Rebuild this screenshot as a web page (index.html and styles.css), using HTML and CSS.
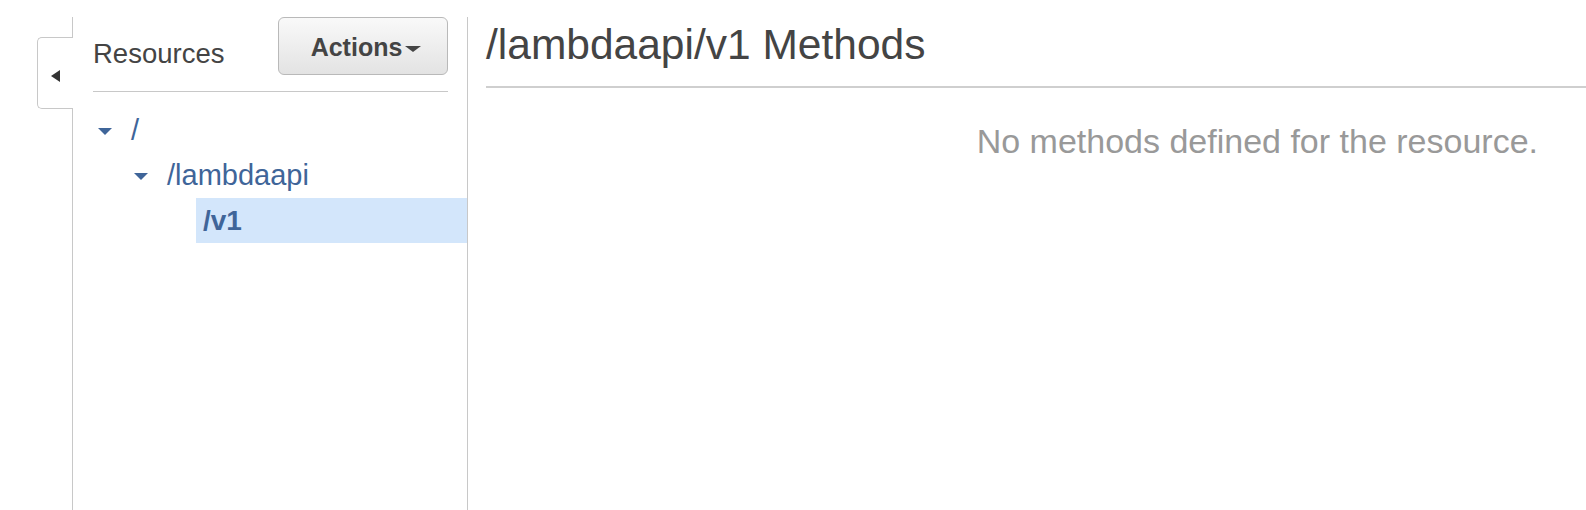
FILE: index.html
```html
<!DOCTYPE html>
<html>
<head>
<meta charset="utf-8">
<link rel="stylesheet" href="styles.css">
</head>
<body>
<div class="layout">
  <div class="tab"><span class="tab-arrow"></span></div>
  <aside class="nav">
    <div class="nav-header">
      <span class="nav-title">Resources</span>
      <button class="actions">Actions<span class="caret"></span></button>
    </div>
    <ul class="tree">
      <li class="row lvl0"><span class="tri"></span><span class="name">/</span></li>
      <li class="row lvl1"><span class="tri"></span><span class="name">/lambdaapi</span></li>
      <li class="row lvl2 selected"><span class="name">/v1</span></li>
    </ul>
  </aside>
  <main class="main">
    <h1 class="title">/lambdaapi/v1 Methods</h1>
    <p class="empty">No methods defined for the resource.</p>
  </main>
</div>
</body>
</html>
```
FILE: styles.css
```css
* { box-sizing: border-box; }
html, body { margin: 0; padding: 0; background: #fff; }
body {
  font-family: "Liberation Sans", Arial, sans-serif;
  width: 1586px;
  height: 510px;
  overflow: hidden;
}
.layout {
  display: flex;
  align-items: flex-start;
  padding-top: 17px;
  height: 510px;
}
.tab {
  margin-left: 37px;
  margin-top: 20px;
  width: 36px;
  height: 72px;
  margin-right: -1px;
  border: 1px solid #c8c8c8;
  border-right: none;
  border-radius: 5px 0 0 5px;
  background: #fff;
  position: relative;
  z-index: 1;
  display: flex;
  align-items: center;
  padding-left: 13px;
}
.tab-arrow {
  width: 0;
  height: 0;
  border-top: 6px solid transparent;
  border-bottom: 6px solid transparent;
  border-right: 9px solid #333;
  margin-top: 6px;
}
.nav {
  width: 396px;
  height: 493px;
  border-left: 1px solid #c8c8c8;
  border-right: 1px solid #c8c8c8;
  padding-left: 20px;
  flex-shrink: 0;
}
.nav-header {
  display: flex;
  justify-content: space-between;
  align-items: flex-start;
  margin-right: 19px;
  height: 75px;
  border-bottom: 1px solid #c8c8c8;
}
.nav-title {
  margin-top: 22px;
  font-size: 27.5px;
  line-height: 30px;
  color: #444;
}
.actions {
  width: 170px;
  height: 58px;
  border: 1px solid #b9b9b9;
  border-radius: 6px;
  background: linear-gradient(#f9f9f9, #e3e3e3);
  font-family: "Liberation Sans", Arial, sans-serif;
  font-weight: bold;
  font-size: 25px;
  color: #444;
  display: flex;
  align-items: center;
  justify-content: center;
  padding: 2px 0 0 6px;
}
.caret {
  width: 0;
  height: 0;
  border-left: 8px solid transparent;
  border-right: 8px solid transparent;
  border-top: 6px solid #444;
  margin-left: 3px;
  margin-top: 4px;
}
.tree {
  list-style: none;
  margin: 16px 0 0;
  padding: 0;
}
.row {
  display: flex;
  align-items: center;
  height: 45px;
  font-size: 29px;
  color: #3f6599;
}
.lvl0 { padding-left: 5px; }
.lvl1 { padding-left: 41px; }
.lvl2 { margin-left: 103px; padding-left: 7px; font-size: 28px; }
.tri {
  width: 0;
  height: 0;
  border-left: 7px solid transparent;
  border-right: 7px solid transparent;
  border-top: 7px solid #3f6599;
  margin-right: 19px;
  margin-top: 2px;
}
.selected {
  background: #d3e6fb;
  font-weight: bold;
}
.main {
  flex: 1;
  padding-left: 18px;
}
.title {
  margin: 4px 0 0;
  font-weight: normal;
  font-size: 42.5px;
  line-height: 48px;
  color: #444;
  padding-bottom: 17px;
  border-bottom: 2px solid #cfcfcf;
}
.empty {
  margin: 34px 0 0;
  text-align: right;
  padding-right: 48px;
  font-size: 34px;
  line-height: 38px;
  color: #999;
}
```
